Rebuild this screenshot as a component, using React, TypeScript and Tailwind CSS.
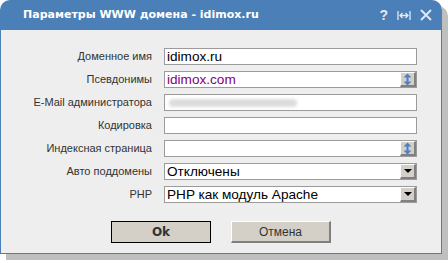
import React from 'react';

function SpinButton() {
  return (
    <div className="w-[16px] h-full bg-[#d4d0c8] border-l border-t border-white border-r-[2px] border-b-[2px] border-r-[#808080] border-b-[#808080] flex items-center justify-center">
      <svg width="9" height="13" viewBox="0 0 9 13">
        <path d="M4.5 0.5 L8.5 4.5 L5.5 4.5 L5.5 8.5 L8.5 8.5 L4.5 12.5 L0.5 8.5 L3.5 8.5 L3.5 4.5 L0.5 4.5 Z" fill="#4f7fc4" />
      </svg>
    </div>
  );
}

function DropButton() {
  return (
    <div className="w-[16px] h-full bg-[#d4d0c8] border-l border-t border-white border-r-[2px] border-b-[2px] border-r-[#808080] border-b-[#808080] flex items-center justify-center">
      <svg width="8" height="4" viewBox="0 0 8 4">
        <path d="M0 0 L8 0 L4 4 Z" fill="#000" />
      </svg>
    </div>
  );
}

function Field({ children, button }: { children?: React.ReactNode; button?: React.ReactNode }) {
  return (
    <div className="h-[17px] bg-white border border-[#9b9b9b] flex items-stretch">
      <div className="flex-1 flex items-center pl-[2px] text-[13.6px] leading-none font-['Liberation_Sans',sans-serif] overflow-hidden">
        {children}
      </div>
      {button}
    </div>
  );
}

export default function App() {
  const rows = [
    { label: 'Доменное имя', field: <Field><span className="text-black">idimox.ru</span></Field> },
    { label: 'Псевдонимы', field: <Field button={<SpinButton />}><span className="text-[#800080]">idimox.com</span></Field> },
    {
      label: 'E-Mail администратора',
      field: (
        <Field>
          <div className="ml-[2px] w-[128px] h-[8px] rounded-full bg-[#dcdcdc] blur-[1.5px]" />
        </Field>
      ),
    },
    { label: 'Кодировка', field: <Field /> },
    { label: 'Индексная страница', field: <Field button={<SpinButton />} /> },
    { label: 'Авто поддомены', field: <Field button={<DropButton />}><span className="text-black">Отключены</span></Field> },
    { label: 'PHP', field: <Field button={<DropButton />}><span className="text-black">PHP как модуль Apache</span></Field> },
  ];

  return (
    <div className="w-[448px] h-[263px] bg-white overflow-hidden">
      <div className="w-[442px] h-[254px] flex flex-col rounded-t-[10px] shadow-[6px_6px_0_#bfbfbf]">
        {/* title bar */}
        <div className="h-[30px] bg-[#4b7fb8] rounded-t-[10px] flex items-center pl-[23px] pr-[10px]">
          <span className="flex-1 text-white font-bold text-[11px] font-['DejaVu_Sans',sans-serif] pt-[1px]">
            Параметры WWW домена - idimox.ru
          </span>
          <div className="flex items-center gap-[9px] text-[#e2eaf4]">
            <span className="font-bold text-[14px] font-['Liberation_Sans',sans-serif] leading-none">?</span>
            <svg width="14" height="11" viewBox="0 0 14 11" fill="none" stroke="#e2eaf4" strokeWidth="1.3">
              <path d="M1 1 V10 M13 1 V10 M3 5.5 H11 M5.5 3 L3 5.5 L5.5 8 M8.5 3 L11 5.5 L8.5 8" />
            </svg>
            <svg width="12" height="12" viewBox="0 0 12 12" stroke="#e2eaf4" strokeWidth="1.8">
              <path d="M1 1 L11 11 M11 1 L1 11" />
            </svg>
          </div>
        </div>
        {/* body */}
        <div className="flex-1 bg-[#eeeeee] border-x border-b border-[#4b7fb8] flex flex-col pt-[18px]">
          <div className="grid grid-cols-[151px_253px] gap-x-[12px] gap-y-[6px]">
            {rows.map((row, i) => (
              <React.Fragment key={i}>
                <div className="h-[17px] flex items-center justify-end text-[11px] text-[#333] font-['Liberation_Sans',sans-serif] whitespace-nowrap">
                  {row.label}
                </div>
                {row.field}
              </React.Fragment>
            ))}
          </div>
          <div className="flex justify-center gap-[20px] mt-[18px]">
            <button className="w-[100px] h-[22px] bg-[#d4d0c8] border border-black text-[12px] font-bold text-[#333] font-['DejaVu_Sans',sans-serif]">
              Ok
            </button>
            <button className="w-[100px] h-[22px] bg-[#d4d0c8] border-l border-t border-white border-r-[2px] border-b-[2px] border-r-[#808080] border-b-[#808080] text-[12px] text-[#333] font-['Liberation_Sans',sans-serif]">
              Отмена
            </button>
          </div>
        </div>
      </div>
    </div>
  );
}
